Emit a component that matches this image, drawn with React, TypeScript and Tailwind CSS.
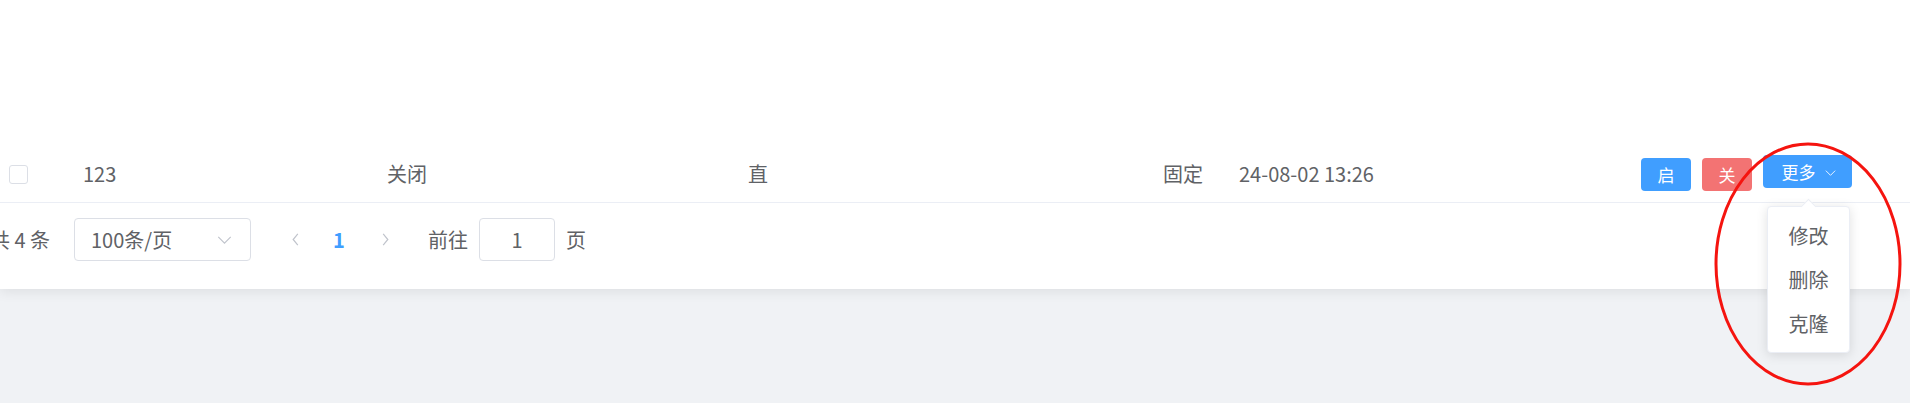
import React from "react";

function Chevron({ dir, className }: { dir: "left" | "right" | "down"; className?: string }) {
  if (dir === "down") {
    return (
      <svg viewBox="0 0 16 9" className={className} fill="none" stroke="currentColor" strokeWidth="1.3">
        <polyline points="1,1 8,8 15,1" />
      </svg>
    );
  }
  const pts = dir === "left" ? "6,1 1,7 6,13" : "1,1 6,7 1,13";
  return (
    <svg viewBox="0 0 7 14" className={className} fill="none" stroke="currentColor" strokeWidth="1.3">
      <polyline points={pts} />
    </svg>
  );
}

function MoreMenu() {
  return (
    <div className="relative mt-[10px] ml-[11px]">
      <button className="flex h-[33px] w-[89px] items-center justify-center gap-[9px] rounded-[4px] bg-[#409eff] pl-[2px] text-[17px] text-white">
        <span>更多</span>
        <Chevron dir="down" className="mt-[2px] h-[6px] w-[11px]" />
      </button>
      <div className="absolute left-[4px] top-[51px] z-20 w-[83px] rounded-[4px] border border-[#ebeef5] bg-white pb-[6px] pt-[7px] shadow-[0_2px_12px_rgba(0,0,0,0.12)]">
        <div className="absolute left-[35px] top-[-6px] h-[11px] w-[11px] rotate-45 border-l border-t border-[#ebeef5] bg-white" />
        {["修改", "删除", "克隆"].map((t) => (
          <div key={t} className="flex h-[44px] items-center justify-center text-[20px] text-[#606266]">
            {t}
          </div>
        ))}
      </div>
    </div>
  );
}

function TableRow() {
  return (
    <div className="flex h-[58px] border-b border-[#ebeef5] text-[20px] text-[#606266]">
      <div className="flex w-[83px] shrink-0 items-center pl-[9px]">
        <span className="mt-[1px] block h-[19px] w-[19px] rounded-[3px] border border-[#dcdfe6] bg-white" />
      </div>
      <div className="flex w-[304px] shrink-0 items-center">123</div>
      <div className="flex w-[361px] shrink-0 items-center">关闭</div>
      <div className="flex w-[415px] shrink-0 items-center">直</div>
      <div className="flex w-[76px] shrink-0 items-center">固定</div>
      <div className="flex w-[402px] shrink-0 items-center">24-08-02 13:26</div>
      <div className="flex items-start">
        <button className="mt-[13px] flex h-[33px] w-[50px] items-center justify-center rounded-[4px] bg-[#409eff] text-[17px] text-white">
          启
        </button>
        <button className="ml-[11px] mt-[13px] flex h-[33px] w-[50px] items-center justify-center rounded-[4px] bg-[#f37373] text-[17px] text-white">
          关
        </button>
        <MoreMenu />
      </div>
    </div>
  );
}

function Pagination() {
  return (
    <div className="flex h-[86px] items-start pt-[15px] text-[20px] text-[#606266]">
      <div className="flex h-[43px] w-[74px] shrink-0 items-center justify-end pr-[24px]">
        <span className="whitespace-nowrap">共 4 条</span>
      </div>
      <div className="flex h-[43px] w-[177px] shrink-0 items-center justify-between rounded-[4px] border border-[#dcdfe6] pl-[16px] pr-[18px]">
        <span>100条/页</span>
        <Chevron dir="down" className="h-[8px] w-[15px] text-[#c0c4cc]" />
      </div>
      <div className="ml-[23px] flex h-[43px] w-[42px] items-center justify-center text-[#c0c4cc]">
        <Chevron dir="left" className="h-[13px] w-[7px]" />
      </div>
      <div className="flex h-[43px] w-[46px] items-center justify-center font-bold text-[#409eff]">1</div>
      <div className="flex h-[43px] w-[46px] items-center justify-center text-[#c0c4cc]">
        <Chevron dir="right" className="h-[13px] w-[7px]" />
      </div>
      <div className="ml-[20px] flex h-[43px] items-center">前往</div>
      <div className="ml-[11px] flex h-[43px] w-[76px] items-center justify-center rounded-[4px] border border-[#dcdfe6]">
        1
      </div>
      <div className="ml-[11px] flex h-[43px] items-center">页</div>
    </div>
  );
}

export default function App() {
  return (
    <div className="relative h-[412px] w-[1910px] overflow-hidden bg-white font-['Noto_Sans_CJK_SC','Noto_Sans',sans-serif]">
      <div className="relative z-10 bg-white shadow-[0_3px_12px_rgba(0,0,0,0.08)]">
        <div className="h-[145px]" />
        <TableRow />
        <Pagination />
      </div>
      <div className="h-[114px] bg-[#f0f2f5]" />
      <svg
        className="pointer-events-none absolute left-[1710px] top-[140px] z-30"
        width="200"
        height="250"
        viewBox="0 0 200 250"
      >
        <ellipse cx="98" cy="124" rx="92" ry="120" fill="none" stroke="#f5140f" strokeWidth="3" />
      </svg>
    </div>
  );
}
